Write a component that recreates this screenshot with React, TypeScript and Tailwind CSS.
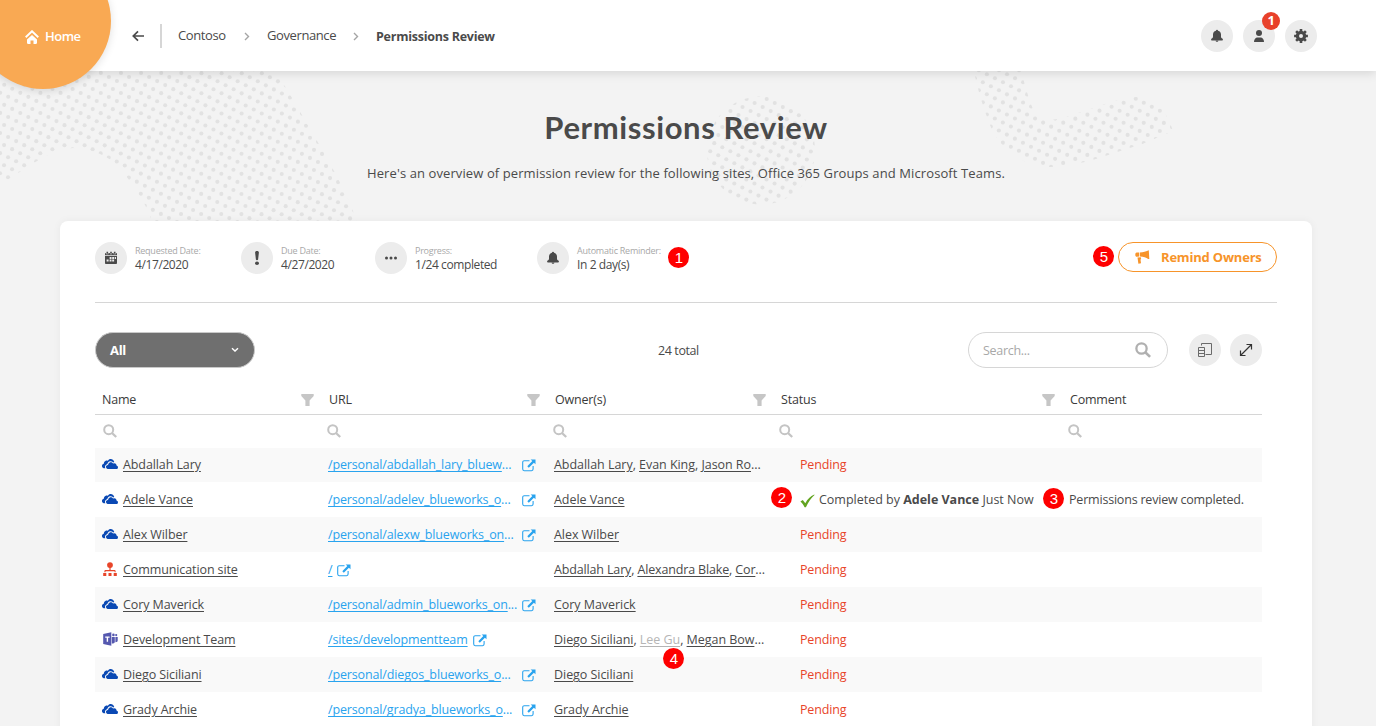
import React from "react";
import { ImOnedrive } from "react-icons/im";

type Kind = "drive" | "site" | "team";

interface Person {
  name: string;
  muted?: boolean;
}

interface Row {
  kind: Kind;
  name: string;
  url: string;
  cut?: boolean;
  owners: Person[];
  more?: boolean;
  done?: boolean;
}

const rows: Row[] = [
  { kind: "drive", name: "Abdallah Lary", url: "/personal/abdallah_lary_bluew", cut: true, owners: [{ name: "Abdallah Lary" }, { name: "Evan King" }, { name: "Jason Ro" }], more: true },
  { kind: "drive", name: "Adele Vance", url: "/personal/adelev_blueworks_o", cut: true, owners: [{ name: "Adele Vance" }], done: true },
  { kind: "drive", name: "Alex Wilber", url: "/personal/alexw_blueworks_on", cut: true, owners: [{ name: "Alex Wilber" }] },
  { kind: "site", name: "Communication site", url: "/", owners: [{ name: "Abdallah Lary" }, { name: "Alexandra Blake" }, { name: "Cor" }], more: true },
  { kind: "drive", name: "Cory Maverick", url: "/personal/admin_blueworks_on", cut: true, owners: [{ name: "Cory Maverick" }] },
  { kind: "team", name: "Development Team", url: "/sites/developmentteam", owners: [{ name: "Diego Siciliani" }, { name: "Lee Gu", muted: true }, { name: "Megan Bow" }], more: true },
  { kind: "drive", name: "Diego Siciliani", url: "/personal/diegos_blueworks_o", cut: true, owners: [{ name: "Diego Siciliani" }] },
  { kind: "drive", name: "Grady Archie", url: "/personal/gradya_blueworks_o", cut: true, owners: [{ name: "Grady Archie" }] },
];

const Bell = () => (
  <svg width="14" height="14" viewBox="0 0 14 14" fill="#4a4a4a">
    <path d="M7 .8c.6 0 1 .4 1.1.9 1.800.4 2.900 1.900 2.900 3.800v2.300c0 .9.6 1.500 1.600 2 .5.300.4 1.600-.3 1.600H1.700c-.7 0-.8-1.300-.3-1.600 1-.5 1.600-1.100 1.600-2V5.500C3 3.600 4.100 2.100 5.900 1.700 6 1.200 6.400.8 7 .8Z" />
    <path d="M5.600 11.400h2.800c0 .9-.6 1.400-1.400 1.400s-1.400-.5-1.400-1.400Z" />
  </svg>
);

const User = () => (
  <svg width="14" height="14" viewBox="0 0 14 14" fill="#4a4a4a">
    <circle cx="7" cy="4" r="3" />
    <path d="M2 13c0-3 1.800-4.600 3.200-4.600h3.600C10.200 8.400 12 10 12 13Z" />
  </svg>
);

const Gear = () => (
  <svg width="14" height="14" viewBox="0 0 14 14" fill="#4a4a4a">
    {[0, 45, 90, 135].map((a) => (
      <path key={a} d="M5.700.1h2.600V3.200H5.700ZM5.700 10.800h2.600v3.100H5.700Z" transform={`rotate(${a} 7 7)`} />
    ))}
    <circle cx="7" cy="7" r="3.600" fill="none" stroke="#4a4a4a" strokeWidth="3.200" />
  </svg>
);

const Calendar = () => (
  <svg width="14" height="14" viewBox="0 0 14 14" fill="#4a4a4a">
    <path d="M2.500.8h1.600v2H2.500ZM6.200.8h1.600v2H6.200ZM9.900.8h1.600v2H9.900Z" />
    <path d="M1 4V3.300C1 2.500 1.500 2 2 2h.2v1.200h2.200V2h1.500v1.200h2.200V2h1.500v1.200h2.200V2h.2c.6 0 1 .5 1 1.300V4Z" />
    <path fillRule="evenodd" d="M1 4.700h12V12c0 .7-.5 1-1.200 1H2.200C1.500 13 1 12.700 1 12ZM5.600 6v1.900h1.900V6ZM8.200 6v1.900h1.900V6ZM10.800 6v1.900h1.200V6ZM2.600 8.600v1.900h2V8.600ZM5.600 8.600v1.900h1.900V8.600ZM8.200 8.600v1.900h1.900V8.600Z" />
  </svg>
);

const Bang = () => (
  <svg width="14" height="16" viewBox="0 0 14 16" fill="#4a4a4a">
    <path d="M5.100 2.500C5.100 1.500 5.900 1 7 1s1.900.5 1.900 1.500L8.100 9.500c-.1.900-2.100.9-2.200 0Z" />
    <ellipse cx="7" cy="13.200" rx="2" ry="1.700" />
  </svg>
);

const Dots = () => (
  <svg width="14" height="14" viewBox="0 0 14 14" fill="#4a4a4a">
    <circle cx="2.500" cy="7" r="1.500" />
    <circle cx="7" cy="7" r="1.500" />
    <circle cx="11.500" cy="7" r="1.500" />
  </svg>
);

const Home = () => (
  <svg width="14" height="14" viewBox="0 0 14 14" fill="none">
    <path d="M.7 7.200 7 1.200l6.300 6" stroke="#fff" strokeWidth="1.900" />
    <path d="M7 4.900 2 9.600v3.200c0 .7.4 1.100 1 1.100h2.500v-3.300h3v3.300H11c.6 0 1-.4 1-1.100V9.600Z" fill="#fff" />
  </svg>
);

const Megaphone = () => (
  <svg width="15" height="14" viewBox="0 0 15 14" fill="#f7942a">
    <path d="M12.600.7 13.800.3l.5 8.600-1.100.2C11.300 7.500 8.500 6.600 5 6.500L4.700 2.400C8.500 2.100 11 1.600 12.600.7Z" />
    <path d="M4 2.400 4.300 6.600 1.900 6.800C.9 6.800.3 6 .3 4.700S1 2.600 1.600 2.600Z" />
    <path d="M2.500 7.500 5.800 7.300l.4 1.600-.7.700.5 3.700-2.600.4Z" />
  </svg>
);

const Search = ({ size, color }: { size: number; color: string }) => (
  <svg width={size} height={size} viewBox="0 0 14 14" fill="none" stroke={color}>
    <circle cx="5.700" cy="5.700" r="4.500" strokeWidth="2" />
    <path d="m9 9 4.200 4" strokeWidth="2.300" />
  </svg>
);

const Funnel = () => (
  <svg width="13" height="12" viewBox="0 0 13 12" fill="#c6c6c6">
    <path d="M.3 0h12.400v2L8.600 6.400V12H4.400V6.400L.3 2Z" />
  </svg>
);

const External = () => (
  <svg className="shrink-0" width="14" height="13" viewBox="0 0 14 13" fill="none">
    <path d="M7.500 1.700H2.200C1.400 1.700.7 2.300.7 3.200v6.900c0 .9.7 1.600 1.500 1.600h7.400c.9 0 1.500-.7 1.500-1.600V7" stroke="#29a3ee" strokeWidth="1.100" />
    <path d="M8.600.4h4.900v4.900L11.900 3.700 6.800 8.700 5.300 7.200l5-5.100Z" fill="#29a3ee" />
  </svg>
);

const Check = () => (
  <svg width="15" height="14" viewBox="0 0 15 14" fill="#62a420">
    <path d="M.4 7.400 2.800 6l2.500 3.200C7.600 5.200 10.300 2.400 14.300.6l.2.4C11 4.200 8.500 8 5.900 13.200H4.600C3.400 10.800 2.200 9 .4 7.400Z" />
  </svg>
);

const Sitemap = () => (
  <svg width="14" height="14" viewBox="0 0 14 14" fill="#e8452a">
    <circle cx="7" cy="3.100" r="2.900" />
    <path d="M1.400 10.300V9.200c0-.7.5-1.100 1.100-1.100h3.900V5h1.200v3.100h3.900c.6 0 1.100.4 1.100 1.100v1.100h-1V9.200H2.500v1.100Z" />
    <path d="M.2 11h3.100v3H.2ZM5.500 11h3v3h-3ZM10.700 11h3.100v3h-3.100Z" />
  </svg>
);

const Teams = () => (
  <svg width="15" height="14" viewBox="0 0 15 14">
    <circle cx="10.400" cy="2.900" r="1.300" fill="#5558af" />
    <circle cx="13.200" cy="3.100" r="1.100" fill="#5558af" />
    <path d="M8.800 4.900h3v5.200c0 .9-.9 1.400-1.700 1.400H8.800ZM12.400 4.900h2.300v3.600c0 1-.7 1.600-2.300 1.700Z" fill="#5558af" />
    <path d="M.2 1.900 8.300.2v13.600L.2 12.100Z" fill="#5558af" />
    <path d="M2.200 4.400h4.400v1.400H5.100v4H3.700v-4H2.200Z" fill="#fff" />
  </svg>
);

const kindIcon: Record<Kind, React.ReactNode> = {
  drive: <ImOnedrive size={16} color="#0a49b4" />,
  site: <Sitemap />,
  team: <Teams />,
};

const ANGLE = (26.7 * Math.PI) / 180;
const STEP = 9;

// A rotated square lattice of dots around (ox, oy), limited to the box x0..x1, y0..y1.
function lattice(ox: number, oy: number, x0: number, x1: number, y0: number, y1: number) {
  const points: [number, number][] = [];
  for (let a = -60; a <= 60; a++) {
    for (let b = -60; b <= 60; b++) {
      const x = ox + STEP * (a * Math.cos(ANGLE) - b * Math.sin(ANGLE));
      const y = oy + STEP * (a * Math.sin(ANGLE) + b * Math.cos(ANGLE));
      if (x > x0 && x < x1 && y > y0 && y < y1) points.push([x, y]);
    }
  }
  return points;
}

const fields = [
  { id: "wave-left", points: lattice(306, 125.7, -4, 364, 66, 234) },
  { id: "disc", points: lattice(766.7, 99, 704, 818, 94, 208) },
  { id: "wave-right", points: lattice(1015, 98.4, 970, 1177, 66, 171) },
];

const Backdrop = () => (
  <svg className="absolute left-0 top-0" width="1376" height="230" viewBox="0 0 1376 230" fill="#e2e2e2">
    <defs>
      <clipPath id="wave-left">
        <path d="M0 60H262C280 74 292 98 306 122 322 150 345 185 360 230H155C146 200 133 186 124 173 112 156 92 149 73 148 45 150 22 173 0 184Z" />
      </clipPath>
      <clipPath id="disc">
        <circle cx="761" cy="150.500" r="54" />
      </clipPath>
      <clipPath id="wave-right">
        <path d="M972 60H1018C1024 80 1029 104 1036 114 1045 124 1060 119 1078 113 1104 105 1120 97 1140 97 1158 98 1168 115 1173 131L1140 145C1110 153 1085 166 1050 167 1022 166 1002 149 992 130 984 110 977 90 972 60Z" />
      </clipPath>
    </defs>
    {fields.map((f) => (
      <g key={f.id} clipPath={`url(#${f.id})`}>
        {f.points.map(([x, y]) => (
          <circle key={`${x},${y}`} cx={x} cy={y} r="2.050" />
        ))}
      </g>
    ))}
  </svg>
);

const Round = ({ children }: { children: React.ReactNode }) => (
  <span className="flex h-8 w-8 shrink-0 items-center justify-center rounded-full bg-[#ececec]">{children}</span>
);

const Marker = ({ n, className }: { n: number; className: string }) => (
  <span className={`absolute z-10 flex h-[21px] w-[21px] items-center justify-center rounded-full bg-[#fe0000] font-['Liberation_Sans',sans-serif] text-[15px] leading-none tracking-normal text-white ${className}`}>
    {n}
  </span>
);

const Stat = ({ icon, label, value, className }: { icon: React.ReactNode; label: string; value: string; className: string }) => (
  <div className={`flex shrink-0 items-center gap-2 ${className}`}>
    <Round>{icon}</Round>
    <div className="whitespace-nowrap pt-[2px]">
      <div className="text-[9px] leading-[12px] tracking-[-0.25px] text-[#a8a8a8]">{label}</div>
      <div className="text-[12px] leading-[16px] tracking-[-0.4px]">{value}</div>
    </div>
  </div>
);

const grid = "grid grid-cols-[226px_226px_226px_289px_200px]";

export default function App() {
  return (
    <div className="relative h-[726px] w-[1376px] overflow-hidden bg-[#f3f3f3] font-['Open_Sans','Noto_Sans',sans-serif] text-[12.5px] tracking-[-0.3px] text-[#4a4a4a]">
      <Backdrop />

      <header className="relative flex h-[71px] items-center bg-white shadow-[0_2px_10px_rgba(0,0,0,0.13)]">
        <div className="absolute -left-[25px] -top-[47px] h-[136px] w-[136px] rounded-full bg-[#f9a953] shadow-[0_2px_8px_rgba(0,0,0,0.12)]" />
        <div className="relative flex w-[132px] items-center gap-[6px] pl-[25px] pt-[2px] text-[13px] font-semibold tracking-[-0.5px] text-white">
          <Home />
          Home
        </div>
        <svg width="13" height="12" viewBox="0 0 13 12" fill="none" stroke="#4a4a4a" strokeWidth="1.700">
          <path d="M12 6H1.500M6 1.400 1.300 6 6 10.600" />
        </svg>
        <div className="ml-[15px] h-6 w-[2px] bg-[#d6d6d6]" />
        <nav className="ml-4 flex items-center whitespace-nowrap pt-px text-[13px] tracking-[-0.4px]">
          <span className="w-[66px]">Contoso</span>
          <svg width="6" height="9" viewBox="0 0 6 9" fill="none" stroke="#a5a5a5" strokeWidth="1.400"><path d="m1 1 3.500 3.500L1 8" /></svg>
          <span className="ml-[17px] w-[86px]">Governance</span>
          <svg width="6" height="9" viewBox="0 0 6 9" fill="none" stroke="#a5a5a5" strokeWidth="1.400"><path d="m1 1 3.500 3.500L1 8" /></svg>
          <span className="ml-[17px] pt-[2px] text-[12.5px] font-bold tracking-[-0.25px]">Permissions Review</span>
        </nav>
        <div className="ml-auto mr-[59px] flex gap-[10px]">
          <Round><Bell /></Round>
          <div className="relative">
            <Round><User /></Round>
            <span className="absolute -top-2 left-[19px] flex h-[18px] w-[18px] items-center justify-center rounded-full bg-[#e8412a] text-[13px] font-bold leading-none text-white">1</span>
          </div>
          <Round><Gear /></Round>
        </div>
      </header>

      <div className="relative flex h-[150px] flex-col items-center pr-[4px] pt-[37px]">
        <h1 className="font-['Lato',sans-serif] text-[31px] font-bold leading-[38px] tracking-[0.600px]">Permissions Review</h1>
        <p className="mt-[17px] text-[13px] leading-5 tracking-[0.100px]">Here's an overview of permission review for the following sites, Office 365 Groups and Microsoft Teams.</p>
      </div>

      <main className="relative ml-[60px] h-[520px] w-[1252px] rounded-lg bg-white px-[35px] shadow-[0_0_8px_rgba(0,0,0,0.05)]">
        <section className="flex h-[82px] items-start border-b border-[#d6d6d6] pt-[21px]">
          <Stat className="w-[146px]" icon={<Calendar />} label="Requested Date:" value="4/17/2020" />
          <Stat className="w-[134px]" icon={<Bang />} label="Due Date:" value="4/27/2020" />
          <Stat className="w-[162px]" icon={<Dots />} label="Progress:" value="1/24 completed" />
          <Stat className="w-[140px]" icon={<Bell />} label="Automatic Reminder:" value="In 2 day(s)" />
          <button className="ml-auto flex h-[30px] w-[159px] items-center gap-[11px] whitespace-nowrap rounded-full border border-[#f7942a] pl-4 text-[13px] font-bold tracking-[-0.200px] text-[#f7942a]">
            <Megaphone />
            <span className="pt-[2px]">Remind Owners</span>
          </button>
        </section>

        <section className="mt-[29px] flex h-9 items-center">
          <button className="flex h-9 w-40 items-center justify-between rounded-[18px] border border-[#c9c9c9] bg-[#6f6f6f] pl-[14px] pr-[15px] text-[13px] font-bold text-white">
            <span className="pt-[2px]">All</span>
            <svg width="8" height="6" viewBox="0 0 8 6" fill="none" stroke="#fff" strokeWidth="1.400"><path d="m1 1.200 3 2.900 3-2.900" /></svg>
          </button>
          <span className="w-[713px] pl-[403px] pt-[2px] tracking-[-0.4px]">24 total</span>
          <label className="flex h-9 w-[200px] items-center justify-between rounded-[18px] border border-[#d6d6d6] pl-[14px] pr-4 text-[12.5px] text-[#a8a8a8]">
            <span className="pt-[2px]">Search...</span>
            <Search size={16} color="#b0b0b0" />
          </label>
          <div className="ml-[21px] flex gap-[9px]">
            <Round>
              <svg width="16" height="16" viewBox="0 0 16 16" fill="none" stroke="#6a6a6a">
                <path d="M4.500 3.500v-2h10v11h-6M1.500 5.500h6v9h-6ZM1.500 8.500h6M1.500 11.500h6" />
              </svg>
            </Round>
            <Round>
              <svg width="14" height="14" viewBox="0 0 14 14" fill="none" stroke="#333" strokeWidth="1.200">
                <path d="M1.500 12.500 12.500 1.500M7.500 1.500h5v5M1.500 7.500v5h5" />
              </svg>
            </Round>
          </div>
        </section>

        <section className="mt-4 w-[1167px]">
          <div className={`${grid} h-[31px] border-b border-[#d6d6d6]`}>
            {["Name", "URL", "Owner(s)", "Status", "Comment"].map((title, i) => (
              <div key={title} className={`flex h-[31px] items-center justify-between pr-[7.5px] tracking-[-0.2px] text-[#3a3a3a] ${i === 0 ? "pl-[7px]" : "pl-2"}`}>
                <span className="pt-[2px]">{title}</span>
                {i < 4 && <Funnel />}
              </div>
            ))}
          </div>
          <div className={`${grid} h-[33px]`}>
            {[0, 1, 2, 3, 4].map((i) => (
              <div key={i} className={`flex items-center pb-[2px] ${i === 0 ? "pl-2" : "pl-[6px]"}`}>
                <Search size={14} color="#c4c4c4" />
              </div>
            ))}
          </div>
          {rows.map((r, i) => (
            <div key={r.name} className={`${grid} whitespace-nowrap tracking-[-0.1px] ${i === 0 ? "h-[34px]" : "h-[35px] pt-[2px]"} ${i % 2 ? "bg-white" : "bg-[#f9f9f9]"}`}>
              <div className="flex items-center pl-[7px]">
                <span className={`flex w-[21px] shrink-0 ${i === 0 ? "pb-[2px]" : r.kind === "drive" ? "pb-[4px]" : "pb-[3px] pl-px"}`}>{kindIcon[r.kind]}</span>
                <span className="underline underline-offset-2">{r.name}</span>
              </div>
              <div className="flex items-center pl-[7px] tracking-[-0.14px] text-[#29a3ee]">
                <span className={r.cut ? "w-[194px]" : "pr-[5px]"}>
                  <span className="underline underline-offset-2 [text-decoration-skip-ink:none]">{r.url}</span>
                  {r.cut && "..."}
                </span>
                <External />
              </div>
              <div className={`flex items-center pl-[7px] ${i === 0 || i === 5 ? "tracking-[-0.04px]" : i === 3 ? "tracking-[-0.15px]" : "tracking-[-0.05px]"}`}>
                <span>
                  {r.owners.map((o, k) => (
                    <React.Fragment key={o.name}>
                      {k > 0 && ", "}
                      <span className={`underline underline-offset-2 ${o.muted ? "text-[#b5b5b5]" : ""}`}>{o.name}</span>
                    </React.Fragment>
                  ))}
                  {r.more && "..."}
                </span>
              </div>
              {r.done ? (
                <div className="flex items-center gap-1 pl-[27px] tracking-[-0.01px]">
                  <Check />
                  <span>Completed by <b>Adele Vance</b> Just Now</span>
                </div>
              ) : (
                <div className="flex items-center pl-[27px] tracking-[-0.15px] text-[#e8452a]">Pending</div>
              )}
              <div className="flex items-center pl-[7px] tracking-[-0.2px]">{r.done && "Permissions review completed."}</div>
            </div>
          ))}
        </section>
      </main>

      <Marker n={1} className="left-[668.3px] top-[247.3px]" />
      <Marker n={2} className="left-[771.3px] top-[487.3px]" />
      <Marker n={3} className="left-[1043.3px] top-[488.3px]" />
      <Marker n={4} className="left-[663.3px] top-[648.3px]" />
      <Marker n={5} className="left-[1093.3px] top-[246.3px]" />
    </div>
  );
}
